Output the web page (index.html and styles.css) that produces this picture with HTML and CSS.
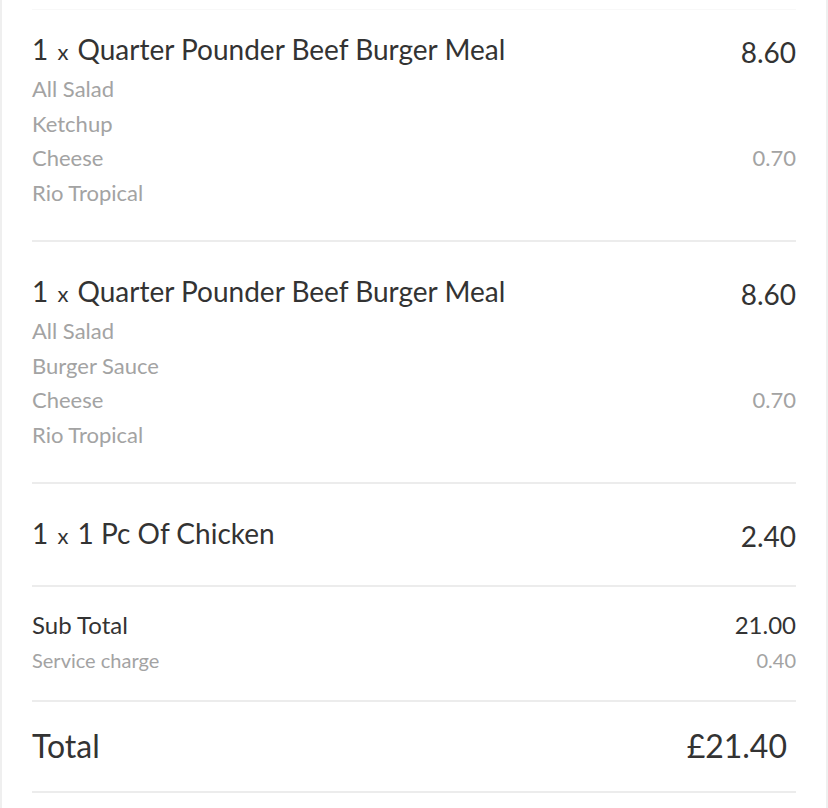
FILE: index.html
```html
<!DOCTYPE html>
<html lang="en">
<head>
    <meta charset="UTF-8">
    <meta name="viewport" content="width=device-width, initial-scale=1.0">
    <title>Your Order</title>
    <link rel="stylesheet" href="styles.css">
</head>
<body>
    <div class="basket">
        <div class="order-item">
            <div class="item-row">
                <span class="item-name"><span class="qty">1 <small>x</small></span> Quarter Pounder Beef Burger Meal</span>
                <span class="item-price">8.60</span>
            </div>
            <div class="extra-row"><span>All Salad</span></div>
            <div class="extra-row"><span>Ketchup</span></div>
            <div class="extra-row"><span>Cheese</span><span>0.70</span></div>
            <div class="extra-row"><span>Rio Tropical</span></div>
        </div>

        <div class="order-item">
            <div class="item-row">
                <span class="item-name"><span class="qty">1 <small>x</small></span> Quarter Pounder Beef Burger Meal</span>
                <span class="item-price">8.60</span>
            </div>
            <div class="extra-row"><span>All Salad</span></div>
            <div class="extra-row"><span>Burger Sauce</span></div>
            <div class="extra-row"><span>Cheese</span><span>0.70</span></div>
            <div class="extra-row"><span>Rio Tropical</span></div>
        </div>

        <div class="order-item single">
            <div class="item-row">
                <span class="item-name"><span class="qty">1 <small>x</small></span> 1 Pc Of Chicken</span>
                <span class="item-price">2.40</span>
            </div>
        </div>

        <div class="summary">
            <div class="summary-row">
                <span>Sub Total</span>
                <span>21.00</span>
            </div>
            <div class="summary-row fee">
                <span>Service charge</span>
                <span>0.40</span>
            </div>
        </div>

        <div class="total">
            <span>Total</span>
            <span class="total-price">£21.40</span>
        </div>
    </div>
</body>
</html>
```

FILE: styles.css
```css
* {
    margin: 0;
    padding: 0;
    box-sizing: border-box;
}

body {
    background-color: #ffffff;
    font-family: 'Lato', 'Open Sans', sans-serif;
    color: #333333;
    min-height: 100vh;
    border-left: 2px solid #efefef;
    border-right: 2px solid #efefef;
}

.basket {
    padding: 9px 30px 0;
}

.basket::before {
    content: "";
    display: block;
    border-top: 1px solid #f8f8f8;
}

.order-item {
    padding: 29px 0 30px;
    border-bottom: 2px solid #ececec;
}

.order-item:first-child {
    padding-top: 19px;
}

.order-item.single {
    padding-bottom: 29px;
}

.item-row {
    display: flex;
    justify-content: space-between;
    align-items: flex-start;
    font-size: 28px;
    line-height: 40px;
}

.qty small {
    font-size: 22px;
    margin: 0 2px;
}

.item-price {
    margin-top: 6px;
    line-height: 34px;
}

.extra-row {
    display: flex;
    justify-content: space-between;
    font-size: 22px;
    line-height: 34.5px;
    color: #a3a3a3;
}

.summary {
    padding: 21px 0 22px;
    border-bottom: 2px solid #ececec;
}

.summary-row {
    display: flex;
    justify-content: space-between;
    font-size: 24px;
    line-height: 34px;
}

.summary-row.fee {
    font-size: 20px;
    line-height: 36px;
    color: #a3a3a3;
}

.total {
    display: flex;
    justify-content: space-between;
    font-size: 32px;
    line-height: 40px;
    padding: 24px 0 25px;
    border-bottom: 2px solid #ececec;
}

.total-price {
    padding-right: 9px;
}
```
